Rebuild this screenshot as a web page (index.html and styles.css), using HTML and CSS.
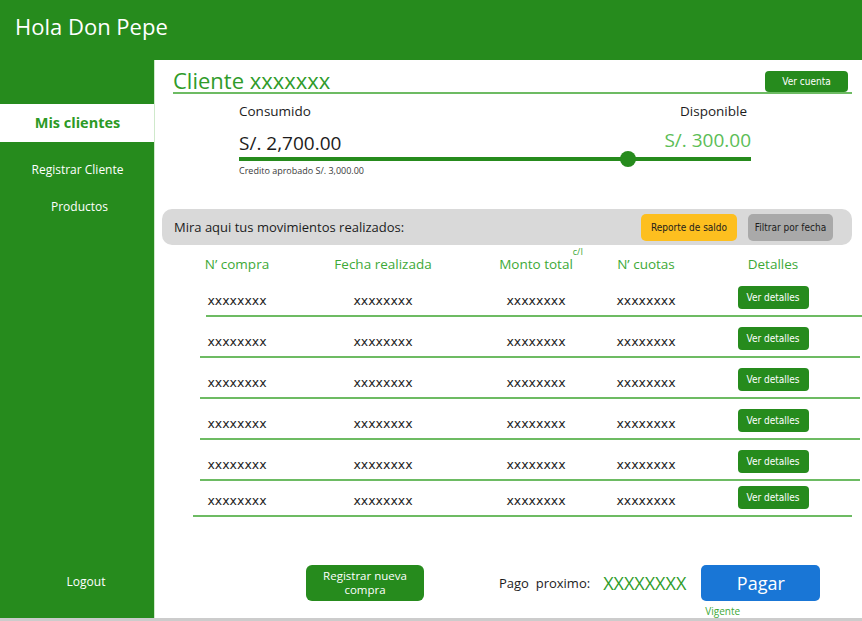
FILE: index.html
```html
<!DOCTYPE html>
<html lang="es">
<head>
<meta charset="utf-8">
<title>Hola Don Pepe</title>
<link rel="stylesheet" href="styles.css">
</head>
<body>
<div class="page">
  <header class="topbar">
    <h1 class="greeting">Hola Don Pepe</h1>
  </header>
  <div class="middle">
    <nav class="sidebar">
      <a class="nav-item nav-active">Mis clientes</a>
      <a class="nav-item nav-register">Registrar Cliente</a>
      <a class="nav-item nav-products">Productos</a>
      <a class="nav-item nav-logout">Logout</a>
    </nav>
    <main class="main">
      <div class="title-row">
        <h2 class="client-title">Cliente xxxxxxx</h2>
        <button class="btn btn-green btn-account">Ver cuenta</button>
      </div>

      <section class="balance">
        <div class="balance-labels">
          <span>Consumido</span>
          <span>Disponible</span>
        </div>
        <div class="balance-amounts">
          <span class="amount-used">S/. 2,700.00</span>
          <span class="amount-free">S/. 300.00</span>
        </div>
        <div class="slider">
          <span class="slider-knob"></span>
        </div>
        <div class="credit-note">Credito aprobado S/. 3,000.00</div>
      </section>

      <div class="moves-bar">
        <span class="moves-title">Mira aqui tus movimientos realizados:</span>
        <div class="moves-actions">
          <button class="btn btn-yellow btn-report">Reporte de saldo</button>
          <button class="btn btn-gray btn-filter">Filtrar por fecha</button>
        </div>
      </div>

      <div class="table">
        <div class="grid head">
          <span>N’ compra</span>
          <span>Fecha realizada</span>
          <span class="head-total">Monto total<sup class="sup">c/I</sup></span>
          <span>N’ cuotas</span>
          <span>Detalles</span>
        </div>

        <div class="grid row">
          <span class="cell">xxxxxxxx</span><span class="cell">xxxxxxxx</span><span class="cell">xxxxxxxx</span><span class="cell">xxxxxxxx</span>
          <button class="btn btn-green btn-detail">Ver detalles</button>
        </div>
        <div class="rule rule-first"></div>

        <div class="grid row">
          <span class="cell">xxxxxxxx</span><span class="cell">xxxxxxxx</span><span class="cell">xxxxxxxx</span><span class="cell">xxxxxxxx</span>
          <button class="btn btn-green btn-detail">Ver detalles</button>
        </div>
        <div class="rule"></div>

        <div class="grid row">
          <span class="cell">xxxxxxxx</span><span class="cell">xxxxxxxx</span><span class="cell">xxxxxxxx</span><span class="cell">xxxxxxxx</span>
          <button class="btn btn-green btn-detail">Ver detalles</button>
        </div>
        <div class="rule"></div>

        <div class="grid row">
          <span class="cell">xxxxxxxx</span><span class="cell">xxxxxxxx</span><span class="cell">xxxxxxxx</span><span class="cell">xxxxxxxx</span>
          <button class="btn btn-green btn-detail">Ver detalles</button>
        </div>
        <div class="rule"></div>

        <div class="grid row">
          <span class="cell">xxxxxxxx</span><span class="cell">xxxxxxxx</span><span class="cell">xxxxxxxx</span><span class="cell">xxxxxxxx</span>
          <button class="btn btn-green btn-detail">Ver detalles</button>
        </div>
        <div class="rule"></div>

        <div class="grid row row-last">
          <span class="cell">xxxxxxxx</span><span class="cell">xxxxxxxx</span><span class="cell">xxxxxxxx</span><span class="cell">xxxxxxxx</span>
          <button class="btn btn-green btn-detail">Ver detalles</button>
        </div>
        <div class="rule rule-last"></div>
      </div>

      <div class="bottom">
        <button class="btn btn-green btn-new">Registrar nueva<br>compra</button>
        <span class="next-label">Pago&nbsp; proximo:</span>
        <span class="next-value">XXXXXXXX</span>
        <div class="pay-group">
          <button class="btn btn-blue btn-pay">Pagar</button>
          <span class="pay-status">Vigente</span>
        </div>
      </div>
    </main>
  </div>
  <div class="footer-line"></div>
</div>
</body>
</html>
```

FILE: styles.css
```css
* { box-sizing: border-box; }

html, body {
  margin: 0;
  padding: 0;
  background: #ffffff;
}

body {
  font-family: "Open Sans", "Noto Sans", sans-serif;
  color: #1c1c1c;
}

.page {
  width: 862px;
  height: 621px;
  display: flex;
  flex-direction: column;
  overflow: hidden;
}

.topbar {
  height: 60px;
  flex: none;
  background: #268b1d;
  padding: 11px 0 0 15px;
}

.greeting {
  margin: 0;
  font-weight: 400;
  font-size: 22px;
  line-height: 30px;
  color: #ffffff;
}

.middle {
  flex: 1;
  display: flex;
  min-height: 0;
}

.sidebar {
  width: 155px;
  flex: none;
  background: #268b1d;
  display: flex;
  flex-direction: column;
}

.nav-item {
  display: block;
  text-align: center;
  color: #ffffff;
  font-size: 12px;
  line-height: 20px;
}

.nav-active {
  margin-top: 44px;
  height: 38px;
  line-height: 38px;
  background: #ffffff;
  color: #2c9a25;
  font-weight: 700;
  font-size: 14.5px;
}

.nav-register { margin-top: 18px; }
.nav-products { margin-top: 17px; padding-left: 4px; }
.nav-logout { margin-top: auto; margin-bottom: 26px; padding-left: 17px; }

.main {
  flex: 1;
  display: flex;
  flex-direction: column;
  padding-left: 7px;
  border-left: 1px solid #cfe9cb;
  margin-left: -1px;
}

.title-row {
  margin: 8px 10px 0 11px;
  display: flex;
  justify-content: space-between;
  align-items: flex-start;
  border-bottom: 2px solid #6dbb63;
  padding-right: 4px;
  height: 26px;
}

.client-title {
  margin: 0;
  font-weight: 400;
  font-size: 22px;
  line-height: 24px;
  color: #2f9b2a;
}

.btn {
  border: none;
  margin: 0;
  padding: 0;
  font-family: "Liberation Sans Narrow", "DejaVu Sans Condensed", "Open Sans", sans-serif;
  cursor: pointer;
}

.btn-green {
  background: #268b1d;
  color: #ffffff;
}

.btn-account {
  margin-top: 3px;
  width: 83px;
  height: 21px;
  border-radius: 4px;
  font-size: 10px;
}

.balance {
  margin-left: 77px;
  width: 512px;
}

.balance-labels {
  margin-top: 7px;
  display: flex;
  justify-content: space-between;
  font-size: 13.5px;
  line-height: 20px;
  padding-right: 4px;
}

.balance-amounts {
  padding-top: 6px;
  display: flex;
  justify-content: space-between;
  align-items: flex-start;
  font-size: 19px;
  line-height: 26px;
}

.amount-used { margin-top: 3px; }
.amount-free { color: #5bbd56; }

.slider {
  margin-top: 1px;
  height: 4px;
  background: #268b1d;
  position: relative;
}

.slider-knob {
  position: absolute;
  left: 381px;
  top: -6px;
  width: 16px;
  height: 16px;
  border-radius: 50%;
  background: #268b1d;
}

.credit-note {
  margin-top: 4px;
  font-size: 9px;
  line-height: 12px;
  color: #3a3a3a;
}

.moves-bar {
  margin: 32px 10px 0 0;
  height: 36px;
  background: #d9d9d9;
  border-radius: 10px;
  display: flex;
  align-items: center;
  justify-content: space-between;
  padding: 0 19px 0 12px;
}

.moves-title {
  font-size: 13px;
}

.moves-actions {
  display: flex;
  gap: 11px;
}

.btn-yellow {
  background: #fdbf1f;
  color: #1c1c1c;
}

.btn-gray {
  background: #a9a9a9;
  color: #1c1c1c;
}

.btn-report, .btn-filter {
  height: 27px;
  border-radius: 5px;
  font-size: 10px;
}

.btn-report { width: 96px; }
.btn-filter { width: 85px; }

.table {
  margin-left: -7px;
}

.grid {
  display: grid;
  grid-template-columns: 130px 162px 144px 76px 178px;
  margin-left: 17px;
  justify-items: center;
}

.head {
  margin-top: 8px;
  height: 23px;
  font-size: 13.5px;
  line-height: 22px;
  color: #3da937;
}

.head-total { position: relative; }

.sup {
  position: absolute;
  left: 100%;
  top: -6px;
  font-size: 9px;
  line-height: 10px;
  margin-left: 0;
}

.row {
  height: 39px;
  align-items: start;
  padding-top: 10px;
}

.row-last {
  height: 34px;
  padding-top: 5px;
}

.cell {
  margin-top: 6px;
  font-family: "DejaVu Sans", "Open Sans", sans-serif;
  font-size: 12.5px;
  line-height: 18px;
  color: #1c1c1c;
}

.btn-detail {
  width: 71px;
  height: 23px;
  border-radius: 4px;
  font-size: 10px;
}

.rule {
  height: 2px;
  background: #6dbb63;
  margin: 0 2px 0 45px;
}

.rule-first { margin: 0 0 0 51px; }
.rule-last { margin: 0 10px 0 38px; }

.bottom {
  margin-top: 48px;
  display: flex;
  align-items: flex-start;
}

.btn-new {
  margin-left: 144px;
  width: 118px;
  height: 36px;
  border-radius: 6px;
  font-family: "Open Sans", sans-serif;
  font-size: 11.5px;
  line-height: 14px;
}

.next-label {
  margin-left: 75px;
  font-size: 13px;
  line-height: 36px;
}

.next-value {
  margin-left: 13px;
  font-size: 18px;
  line-height: 36px;
  color: #2f9b2a;
}

.pay-group {
  margin-left: 15px;
  display: flex;
  flex-direction: column;
}

.btn-blue {
  background: #1976d6;
  color: #ffffff;
}

.btn-pay {
  width: 119px;
  height: 36px;
  border-radius: 5px;
  font-family: "Open Sans", sans-serif;
  font-size: 18px;
}

.pay-status {
  margin: 4px 0 0 4px;
  font-size: 10px;
  line-height: 12px;
  color: #3da937;
}

.footer-line {
  height: 3px;
  flex: none;
  background: #cccccc;
}
```
